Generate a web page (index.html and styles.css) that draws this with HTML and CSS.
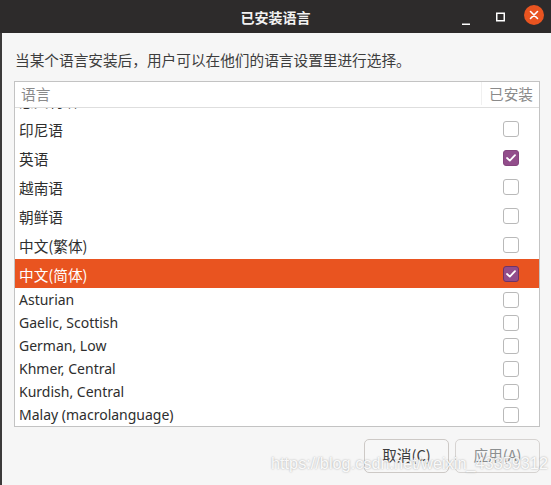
FILE: index.html
```html
<!DOCTYPE html>
<html lang="zh-CN">
<head>
<meta charset="utf-8">
<title>已安装语言</title>
<link rel="stylesheet" href="styles.css">
</head>
<body>
<div class="window">
  <header class="titlebar">
    <div class="spacer"></div>
    <div class="title">已安装语言</div>
    <div class="controls">
      <span class="wbtn"><svg width="20" height="20" viewBox="0 0 20 20"><path d="M6 17.25h8" stroke="#fff" stroke-width="1.5"/></svg></span>
      <span class="wbtn"><svg width="20" height="20" viewBox="0 0 20 20"><rect x="6.75" y="6.25" width="7.5" height="7.5" fill="none" stroke="#fff" stroke-width="1.5"/></svg></span>
      <span class="wbtn close"><svg width="20" height="20" viewBox="0 0 20 20"><path d="M6.5 6.5l7 7M13.5 6.5l-7 7" stroke="#fff" stroke-width="1.6" stroke-linecap="round"/></svg></span>
    </div>
  </header>
  <main class="content">
    <p class="desc">当某个语言安装后，用户可以在他们的语言设置里进行选择。</p>
    <div class="list">
      <div class="list-head">
        <span class="col-lang">语言</span>
        <span class="col-inst">已安装</span>
      </div>
      <div class="list-body">
        <div class="row cjk clipped"><span class="name">意大利语</span></div>
        <div class="row cjk"><span class="name">印尼语</span><span class="cell"><span class="check"></span></span></div>
        <div class="row cjk"><span class="name">英语</span><span class="cell"><span class="check on"><svg width="10" height="8" viewBox="0 0 10 8"><path d="M1 4l2.8 2.6L9 1.2" fill="none" stroke="#fff" stroke-width="1.8" stroke-linecap="round" stroke-linejoin="round"/></svg></span></span></div>
        <div class="row cjk"><span class="name">越南语</span><span class="cell"><span class="check"></span></span></div>
        <div class="row cjk"><span class="name">朝鲜语</span><span class="cell"><span class="check"></span></span></div>
        <div class="row cjk"><span class="name">中文(繁体)</span><span class="cell"><span class="check"></span></span></div>
        <div class="row cjk selected"><span class="name">中文(简体)</span><span class="cell"><span class="check on"><svg width="10" height="8" viewBox="0 0 10 8"><path d="M1 4l2.8 2.6L9 1.2" fill="none" stroke="#fff" stroke-width="1.8" stroke-linecap="round" stroke-linejoin="round"/></svg></span></span></div>
        <div class="row"><span class="name">Asturian</span><span class="cell"><span class="check"></span></span></div>
        <div class="row"><span class="name">Gaelic, Scottish</span><span class="cell"><span class="check"></span></span></div>
        <div class="row"><span class="name">German, Low</span><span class="cell"><span class="check"></span></span></div>
        <div class="row"><span class="name">Khmer, Central</span><span class="cell"><span class="check"></span></span></div>
        <div class="row"><span class="name">Kurdish, Central</span><span class="cell"><span class="check"></span></span></div>
        <div class="row"><span class="name">Malay (macrolanguage)</span><span class="cell"><span class="check"></span></span></div>
      </div>
    </div>
    <div class="actions">
      <button class="btn">取消(C)</button>
      <button class="btn" disabled>应用(A)</button>
    </div>
  </main>
  <div class="watermark">https://blog.csdn.net/weixin_43359312</div>
</div>
</body>
</html>
```

FILE: styles.css
```css
* { box-sizing: border-box; }
html, body { margin: 0; padding: 0; }
body {
  width: 551px;
  height: 485px;
  overflow: hidden;
  background: #f6f6f6;
  font-family: "Noto Sans", "Noto Sans CJK SC", sans-serif;
  color: #3d3d3d;
}
.window {
  position: relative;
  width: 551px;
  height: 485px;
  display: flex;
  flex-direction: column;
}
.titlebar {
  height: 33px;
  flex: none;
  background: #2d2b2b;
  display: grid;
  grid-template-columns: 1fr auto 1fr;
  align-items: center;
}
.title {
  color: #f2f2f2;
  font-family: "Noto Sans CJK SC", sans-serif;
  font-weight: 700;
  font-size: 14px;
  line-height: 20px;
  padding-top: 1px;
}
.controls {
  justify-self: end;
  display: flex;
  gap: 14px;
  padding-right: 7px;
  align-items: center;
}
.wbtn { width: 20px; height: 20px; display: block; }
.wbtn svg { display: block; }
.wbtn.close { background: #e95420; border-radius: 50%; margin-top: -3px; }
.content {
  flex: 1;
  border-left: 2px solid #3c3a3a;
  padding: 17px 11px 0 12px;
  display: flex;
  flex-direction: column;
}
.desc {
  margin: 0 0 11px 1px;
  font-family: "Noto Sans CJK SC", sans-serif;
  font-size: 14.67px;
  line-height: 20px;
  color: #3d3d3d;
}
.list {
  border: 1px solid #c3c3c3;
  background: #fff;
  display: flex;
  flex-direction: column;
}
.list-head {
  height: 26px;
  display: flex;
  border-bottom: 1px solid #dedede;
  font-family: "Noto Sans CJK SC", sans-serif;
  font-size: 14.67px;
  line-height: 20px;
  color: #8a8a8a;
  align-items: center;
  padding-bottom: 2px;
}
.col-lang { flex: 1; padding-left: 6px; }
.col-inst {
  width: 58px;
  height: 100%;
  display: flex;
  align-items: center;
  justify-content: flex-end;
  padding-right: 6px;
  border-left: 1px solid #f0f0f0;
}
.list-body {
  height: 318px;
  overflow: hidden;
}
.row {
  height: 23px;
  display: flex;
  align-items: center;
  font-size: 14px;
  color: #2e2e2e;
}
.row.cjk {
  height: 29px;
  font-family: "Noto Sans CJK SC", sans-serif;
  font-size: 14.67px;
  padding-top: 1px;
}
.row.clipped {
  height: 6px;
  padding-top: 0;
  overflow: hidden;
  align-items: flex-end;
}
.row.clipped .name { line-height: 20px; margin-bottom: 3px; }
.row .name { flex: 1; padding-left: 4px; }
.row .cell {
  width: 58px;
  display: flex;
  justify-content: center;
  padding-left: 2px;
}
.row.selected { background: #e95420; color: #fff; }
.check {
  width: 16px;
  height: 16px;
  border: 1px solid #b9b9b9;
  border-radius: 3px;
  background: #fff;
  display: flex;
  align-items: center;
  justify-content: center;
}
.check.on { background: #924d8b; border-color: #85447e; }
.row.selected .check.on { border-color: #6e3468; }
.actions {
  display: flex;
  justify-content: flex-end;
  gap: 6px;
  margin-top: 12px;
}
.btn {
  width: 85px;
  height: 34px;
  border: 1px solid #cdc9c6;
  border-radius: 5px;
  background: #f7f7f7;
  font-family: "Noto Sans CJK SC", sans-serif;
  font-size: 14.67px;
  line-height: 20px;
  color: #3d3d3d;
  padding: 0 0 3px;
}
.btn:disabled { color: #8c8f90; background: #f6f6f6; border-color: #d6d3d1; }
.watermark {
  position: absolute;
  left: 271px;
  top: 454px;
  font-family: "Liberation Sans", sans-serif;
  font-size: 16.3px;
  color: rgba(255, 255, 255, 0.92);
  text-shadow: 0 0 2px rgba(0, 0, 0, 0.35);
}
```
